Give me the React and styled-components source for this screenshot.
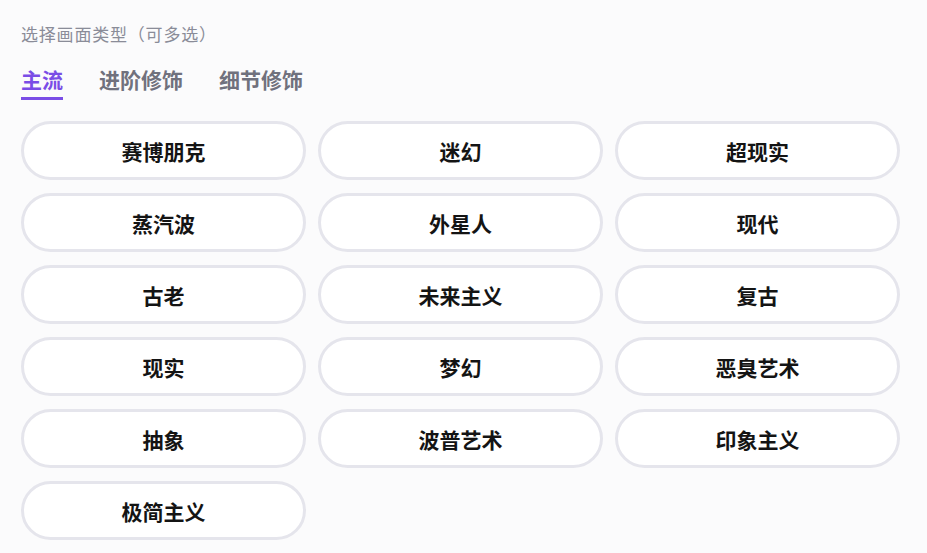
import React, { useState } from "react";
import styled, { createGlobalStyle } from "styled-components";

const GlobalStyle = createGlobalStyle`
  html, body {
    margin: 0;
    padding: 0;
    background: #fbfbfc;
  }
  body {
    font-family: "Noto Sans CJK SC", "Noto Sans", sans-serif;
  }
`;

const Panel = styled.div`
  padding: 24px 27px 12px 21px;
`;

const Title = styled.div`
  font-size: 17px;
  line-height: 20px;
  letter-spacing: 0.8px;
  color: #8a8c98;
`;

const Tabs = styled.div`
  display: flex;
  gap: 36px;
  margin-top: 23px;
`;

const Tab = styled.div`
  font-size: 21px;
  line-height: 24px;
  font-weight: 700;
  color: ${(p) => (p.$active ? "#7a4de6" : "#70717d")};
  padding-bottom: 6px;
  border-bottom: 3px solid ${(p) => (p.$active ? "#7a4de6" : "transparent")};
  cursor: pointer;
`;

const Grid = styled.div`
  display: grid;
  grid-template-columns: repeat(3, 285px);
  column-gap: 12px;
  row-gap: 13px;
  margin-top: 21px;
`;

const Option = styled.button`
  height: 59px;
  box-sizing: border-box;
  border: 3px solid #e5e5ec;
  border-radius: 30px;
  background: #ffffff;
  font-family: inherit;
  font-size: 21px;
  font-weight: 700;
  color: #141414;
  padding: 0;
  cursor: pointer;
`;

const tabs = ["主流", "进阶修饰", "细节修饰"];

const options = [
  "赛博朋克", "迷幻", "超现实",
  "蒸汽波", "外星人", "现代",
  "古老", "未来主义", "复古",
  "现实", "梦幻", "恶臭艺术",
  "抽象", "波普艺术", "印象主义",
  "极简主义",
];

export default function App() {
  const [active, setActive] = useState(0);
  return (
    <>
      <GlobalStyle />
      <Panel>
        <Title>选择画面类型（可多选）</Title>
        <Tabs>
          {tabs.map((t, i) => (
            <Tab key={t} $active={i === active} onClick={() => setActive(i)}>
              {t}
            </Tab>
          ))}
        </Tabs>
        <Grid>
          {options.map((o) => (
            <Option key={o}>{o}</Option>
          ))}
        </Grid>
      </Panel>
    </>
  );
}
